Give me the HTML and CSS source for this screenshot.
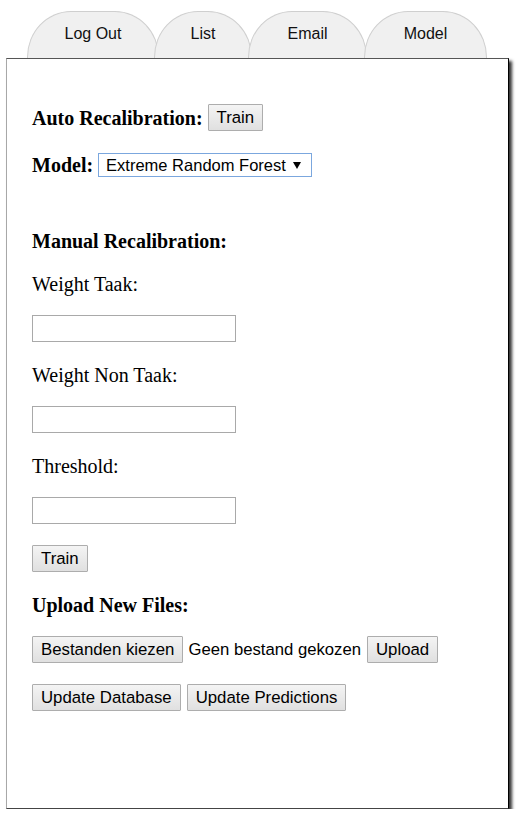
FILE: index.html
```html
<!DOCTYPE html>
<html>
<head>
<meta charset="utf-8">
<link rel="stylesheet" href="styles.css">
</head>
<body>
<div class="page">
  <div class="tabs">
    <div class="tab tab-logout">Log Out</div>
    <div class="tab tab-list">List</div>
    <div class="tab tab-email">Email</div>
    <div class="tab tab-model">Model</div>
  </div>
  <div class="panel">
    <div class="row row-auto">
      <span class="heading">Auto Recalibration:</span>
      <button class="btn">Train</button>
    </div>
    <div class="row row-model">
      <span class="heading">Model:</span>
      <span class="select-wrap">
        <select class="select"><option>Extreme Random Forest</option></select>
      </span>
    </div>
    <div class="heading block m-manual">Manual Recalibration:</div>
    <div class="label m-label1">Weight Taak:</div>
    <input class="field m-input" type="text">
    <div class="label m-label">Weight Non Taak:</div>
    <input class="field m-input" type="text">
    <div class="label m-label">Threshold:</div>
    <input class="field m-input" type="text">
    <button class="btn m-train">Train</button>
    <div class="heading block m-upload">Upload New Files:</div>
    <div class="row row-files">
      <button class="btn">Bestanden kiezen</button>
      <span class="filetext">Geen bestand gekozen</span>
      <button class="btn">Upload</button>
    </div>
    <div class="row row-update">
      <button class="btn">Update Database</button>
      <button class="btn">Update Predictions</button>
    </div>
  </div>
</div>
</body>
</html>
```
FILE: styles.css
```css
* { box-sizing: border-box; }
body { margin: 0; background: #fff; }
.page { padding: 11px 0 0 6px; width: 509px; }
.tabs { display: flex; padding-left: 21px; height: 47px; }
.tab {
  height: 47px;
  background: #f0f0f0;
  border: 1px solid #cfcfcf;
  border-bottom: none;
  border-radius: 44px 44px 0 0 / 46px 46px 0 0;
  display: flex;
  align-items: center;
  justify-content: center;
  padding-bottom: 3px;
  font: 16px "Liberation Sans", Arial, sans-serif;
  color: #111;
}
.tab-logout { width: 132px; }
.tab-list { width: 98px; margin-left: -5px; }
.tab-email { width: 119px; margin-left: -4px; }
.tab-model { width: 123px; margin-left: -3px; }
.panel {
  height: 751px;
  border: 1px solid #a8a8a8;
  border-top-color: #555;
  border-right-color: #000;
  border-bottom-color: #444;
  box-shadow: 3px 3px 3px rgba(0,0,0,0.8);
  padding: 45px 25px 0;
  display: flex;
  flex-direction: column;
  align-items: flex-start;
  background: #fff;
}
.row { display: flex; align-items: center; }
.heading { font: bold 20px/22px "Liberation Serif", "Times New Roman", serif; color: #000; }
.label { font: 20px/22px "Liberation Serif", "Times New Roman", serif; color: #000; }
.row-auto { gap: 5px; height: 27px; }
.row-model { gap: 5px; margin-top: 22px; height: 24px; }
.btn {
  font: 16.8px/19px "Liberation Sans", Arial, sans-serif;
  color: #000;
  height: 27px;
  padding: 3px 8px;
  border: 1px solid #adadad;
  border-radius: 1px;
  background: linear-gradient(#f4f4f4, #e0e0e0);
  margin: 0;
}
.select-wrap { position: relative; display: inline-block; }
.select {
  appearance: none;
  -webkit-appearance: none;
  width: 214px;
  height: 24px;
  border: 1px solid #7ba7de;
  border-radius: 0;
  background: #fff;
  padding: 0 0 0 7px;
  font: 16.5px "Liberation Sans", Arial, sans-serif;
  color: #000;
  outline: none;
  margin: 0;
}
.select-wrap::after {
  content: "";
  position: absolute;
  right: 11px;
  top: 9px;
  border-left: 4px solid transparent;
  border-right: 4px solid transparent;
  border-top: 7px solid #000;
  pointer-events: none;
}
.field {
  width: 204px;
  height: 27px;
  border: 1px solid #a9a9a9;
  margin: 0;
  padding: 0;
  background: #fff;
}
.m-manual { margin-top: 53px; }
.m-label1 { margin-top: 21px; }
.m-label { margin-top: 22px; }
.m-input { margin-top: 20px; }
.m-train { margin-top: 21px; }
.m-upload { margin-top: 22px; }
.row-files { margin-top: 20px; gap: 5px; }
.filetext { font: 16.7px/19px "Liberation Sans", Arial, sans-serif; color: #000; margin-right: 1px; }
.row-update { margin-top: 21px; gap: 6px; }
```
